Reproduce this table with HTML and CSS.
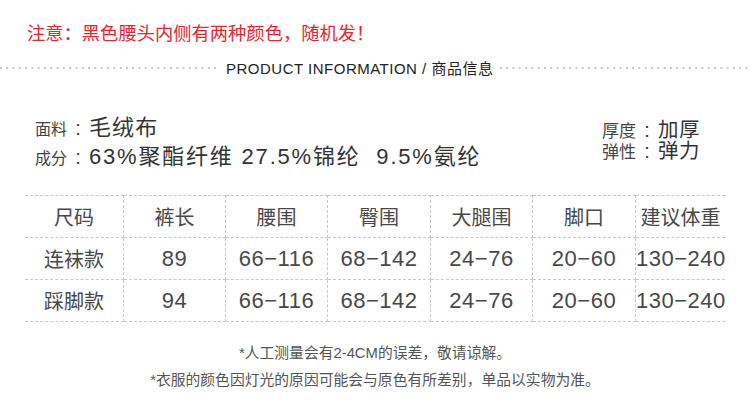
FILE: index.html
```html
<!DOCTYPE html>
<html lang="zh">
<head>
<meta charset="utf-8">
<link rel="stylesheet" href="styles.css">
</head>
<body>
<div class="page">
  <div class="notice">注意：黑色腰头内侧有两种颜色，随机发！</div>
  <div class="title-row">
    <div class="dots dots-left"></div>
    <div class="title">PRODUCT INFORMATION / 商品信息</div>
    <div class="dots dots-right"></div>
  </div>
  <div class="specs">
    <div class="spec-left">
      <div class="spec-line"><span class="label">面料</span><span class="colon">:</span><span class="value">毛绒布</span></div>
      <div class="spec-line"><span class="label">成分</span><span class="colon">:</span><span class="value wide">63%聚酯纤维 27.5%锦纶  9.5%氨纶</span></div>
    </div>
    <div class="spec-right">
      <div class="spec-line small"><span class="label">厚度</span><span class="colon">:</span><span class="value">加厚</span></div>
      <div class="spec-line small"><span class="label">弹性</span><span class="colon">:</span><span class="value">弹力</span></div>
    </div>
  </div>
  <table class="size-table">
    <tr class="head"><td>尺码</td><td>裤长</td><td>腰围</td><td>臀围</td><td>大腿围</td><td>脚口</td><td>建议体重</td></tr>
    <tr><td class="name">连袜款</td><td>89</td><td>66−116</td><td>68−142</td><td>24−76</td><td>20−60</td><td>130−240</td></tr>
    <tr><td class="name">踩脚款</td><td>94</td><td>66−116</td><td>68−142</td><td>24−76</td><td>20−60</td><td>130−240</td></tr>
  </table>
  <div class="notes">
    <p>*人工测量会有2-4CM的误差，敬请谅解。</p>
    <p>*衣服的颜色因灯光的原因可能会与原色有所差别，单品以实物为准。</p>
  </div>
</div>
</body>
</html>
```
FILE: styles.css
```css
html, body {
  margin: 0;
  padding: 0;
  background: #fff;
}
.page {
  width: 750px;
  height: 420px;
  font-family: "Liberation Sans", "Noto Sans CJK SC", sans-serif;
  color: #333;
}
.notice {
  padding: 19px 0 0 27px;
  height: 26px;
  line-height: 26px;
  font-size: 18.3px;
  color: #e3262e;
  font-family: "Noto Sans CJK SC", sans-serif;
}
.title-row {
  display: flex;
  align-items: center;
  margin-top: 10px;
  height: 24px;
}
.dots {
  height: 2px;
  background-image: linear-gradient(to right, #c4c4c4 2px, transparent 2px);
  background-size: 6.3px 2px;
  background-repeat: repeat-x;
}
.dots-left {
  width: 217px;
  margin-right: 9px;
  margin-top: 2px;
}
.dots-right {
  flex: 1;
  margin-left: 7px;
  margin-top: 2px;
}
.title {
  font-size: 15px;
  color: #222;
  white-space: nowrap;
  letter-spacing: 0.5px;
}
.specs {
  display: flex;
  justify-content: space-between;
  padding: 34px 50px 0 35px;
  height: 82px;
}
.spec-line {
  display: flex;
  align-items: baseline;
  height: 29px;
  line-height: 29px;
}
.spec-line .label {
  font-size: 16px;
  font-family: "Noto Sans CJK SC", sans-serif;
  color: #444;
}
.spec-line .colon {
  font-size: 20px;
  width: 22px;
  text-align: center;
  color: #333;
}
.spec-line .value {
  font-size: 22px;
  letter-spacing: 1.1px;
  color: #333;
  white-space: pre;
}
.spec-line .value.wide {
  letter-spacing: 1.8px;
}
.spec-right {
  padding-top: 7px;
}
.spec-line.small {
  height: 21px;
  line-height: 20px;
}
.spec-line.small .label {
  font-size: 17px;
}
.spec-line.small .value {
  font-size: 20.5px;
  letter-spacing: 0.5px;
}
.size-table {
  margin-left: 25px;
  width: 700px;
  border-collapse: collapse;
  table-layout: fixed;
}
.size-table td {
  height: 41px;
  padding: 0;
  text-align: center;
  border: 1px dashed #c8c8c8;
  font-size: 22px;
  letter-spacing: 0.5px;
  color: #484848;
}
.size-table tr td:first-child {
  border-left: none;
}
.size-table tr td:last-child {
  border-right: none;
}
.size-table td:nth-child(1) { width: 98px; }
.size-table td:nth-child(2) { width: 101px; }
.size-table td:nth-child(3) { width: 101px; }
.size-table td:nth-child(4) { width: 102px; }
.size-table td:nth-child(5) { width: 101px; }
.size-table td:nth-child(6) { width: 102px; }
.size-table .head td,
.size-table td.name {
  font-size: 20px;
  letter-spacing: 0;
  font-family: "Noto Sans CJK SC", sans-serif;
}
.notes {
  margin-top: 20px;
  text-align: center;
  color: #555;
  font-size: 14.8px;
}
.notes p {
  margin: 0;
  height: 27px;
  line-height: 22px;
}
```
